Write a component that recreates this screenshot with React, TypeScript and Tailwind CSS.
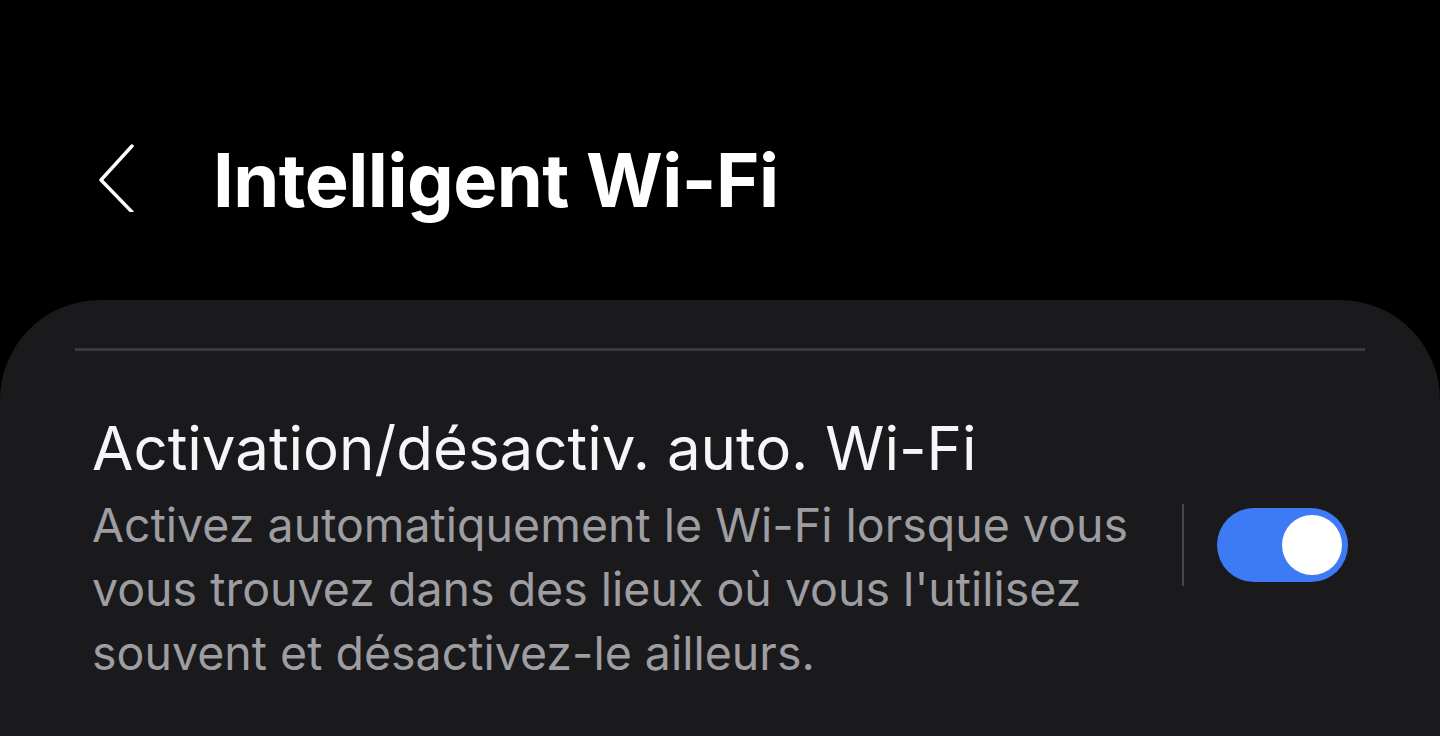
export default function App() {
  return (
    <div className="w-[1440px] h-[736px] bg-black overflow-hidden" style={{ fontFamily: 'Inter, Roboto, "Noto Sans", sans-serif' }}>
      <div className="h-[300px] flex items-start pt-[140px]">
        <div className="w-[213px] flex pl-[96px]">
          <svg width="42" height="72" viewBox="0 0 42 72" fill="none">
            <path d="M36 6 L5 40 L36 72" stroke="white" strokeWidth="3.4" strokeLinecap="round" strokeLinejoin="round" />
          </svg>
        </div>
        <h1 className="text-white font-bold text-[74px] leading-[80px] tracking-[-0.5px]">Intelligent Wi-Fi</h1>
      </div>
      <div className="bg-[#1a1a1c] rounded-t-[100px] h-[436px] pt-[48px] px-[75px]">
        <div className="h-[3px] bg-[#3a3a3c]" />
        <div className="flex items-center pl-[17px] pr-[17px] pt-[62px]">
          <div className="flex-1">
            <div className="text-[#f6f6f8] text-[60px] leading-[70px]">Activation/désactiv. auto. Wi-Fi</div>
            <div className="text-[#9d9da2] text-[46.5px] leading-[64px] mt-[10px] w-[1070px]">
              Activez automatiquement le Wi-Fi lorsque vous vous trouvez dans des lieux où vous l'utilisez souvent et désactivez-le ailleurs.
            </div>
          </div>
          <div className="flex items-center gap-[33px] pb-[8px]">
            <div className="w-[2px] h-[82px] bg-[#48484b]" />
            <div className="w-[131px] h-[74px] rounded-full bg-[#3d7af5] flex items-center justify-end pr-[6px]">
              <div className="w-[60px] h-[60px] rounded-full bg-white" />
            </div>
          </div>
        </div>
      </div>
    </div>
  );
}
